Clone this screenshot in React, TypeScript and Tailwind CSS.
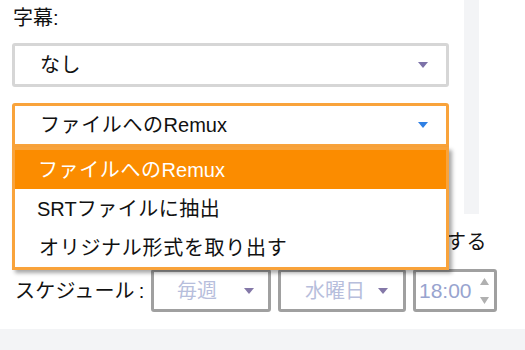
import React from "react";

const Caret = ({ color, className = "" }: { color: string; className?: string }) => (
  <svg width="10" height="6" viewBox="0 0 10 6" className={className}>
    <path d="M0 0 H10 L5 6 Z" fill={color} />
  </svg>
);

export default function App() {
  const font = { fontFamily: '"Liberation Sans", "Noto Sans CJK JP", sans-serif' };
  return (
    <div className="relative w-[525px] h-[350px] overflow-hidden bg-white text-[20px] text-[#111]" style={font}>
      {/* top section */}
      <div className="flex h-[214px]">
        <div className="w-[464px] pl-[12px] pr-[15px]">
          <div className="h-[34px] pt-[4px] pl-[1px] leading-[28px]">字幕:</div>
          <div className="mt-[9px] h-[44px] rounded-[3px] border-[3px] border-[#d6d6d6] flex items-center pl-[25px] pr-[18px]">
            <span className="flex-1 leading-none tracking-[0.5px]">なし</span>
            <Caret color="#7d72a8" />
          </div>
          <div className="relative mt-[16px]">
            <div className="h-[44px] rounded-t-[3px] border-[3px] border-[#f9a33b] flex items-center pl-[25px] pr-[18px]">
              <span className="flex-1 leading-none"><span className="tracking-[0.6px]">ファイルへの</span>Remux</span>
              <Caret color="#2f80e4" />
            </div>
            <div className="absolute left-0 top-[44px] z-10 w-[437px] border-[3px] border-[#f9a33b] bg-white shadow-[3px_3px_4px_rgba(0,0,0,0.35)]">
              <div className="h-[39px] bg-[#fb8c00] text-white flex items-center pl-[23px] leading-none"><span className="tracking-[0.6px]">ファイルへの</span>Remux</div>
              <div className="h-[39px] flex items-center pl-[22px] leading-none">SRT<span className="tracking-[0.5px]">ファイルに抽出</span></div>
              <div className="h-[39px] flex items-center pl-[24px] leading-none tracking-[0.7px]">オリジナル形式を取り出す</div>
            </div>
          </div>
        </div>
        <div className="w-[15px] bg-[#f3f4f6]" />
      </div>

      {/* checkbox row (rest hidden under menu) */}
      <div className="h-[55px] flex items-center justify-end pr-[38px]">
        <span className="leading-none tracking-[0.5px]">する</span>
      </div>

      {/* schedule row */}
      <div className="h-[43px] flex items-center pl-[15px]">
        <span className="w-[136px] leading-none"><span className="tracking-[0.2px]">スケジュール</span><span className="ml-[4px]">:</span></span>
        <div className="w-[120px] h-[43px] rounded-[3px] border-[3px] border-[#a0a0a0] flex items-center pl-[23px] pr-[14px]">
          <span className="flex-1 leading-none text-[#b7bedc]">毎週</span>
          <Caret color="#8478a8" />
        </div>
        <div className="ml-[7px] w-[128px] h-[43px] rounded-[3px] border-[3px] border-[#a0a0a0] flex items-center pl-[24px] pr-[15px]">
          <span className="flex-1 leading-none text-[#b7bedc]">水曜日</span>
          <Caret color="#8478a8" />
        </div>
        <div className="ml-[7px] w-[84px] h-[43px] rounded-[3px] border-[3px] border-[#a0a0a0] flex items-center pl-[3px] pr-[5px]">
          <span className="flex-1 leading-none text-[21px] text-[#98a4cf]">18:00</span>
          <div className="flex flex-col gap-[12px]">
            <svg width="9" height="7" viewBox="0 0 9 7"><path d="M0 7 L4.5 0 L9 7 Z" fill="#b0b0b0" /></svg>
            <svg width="9" height="7" viewBox="0 0 9 7"><path d="M0 0 H9 L4.5 7 Z" fill="#b0b0b0" /></svg>
          </div>
        </div>
      </div>

      {/* bottom band */}
      <div className="mt-[17px] h-[21px] bg-[#f3f4f6]" />
    </div>
  );
}
